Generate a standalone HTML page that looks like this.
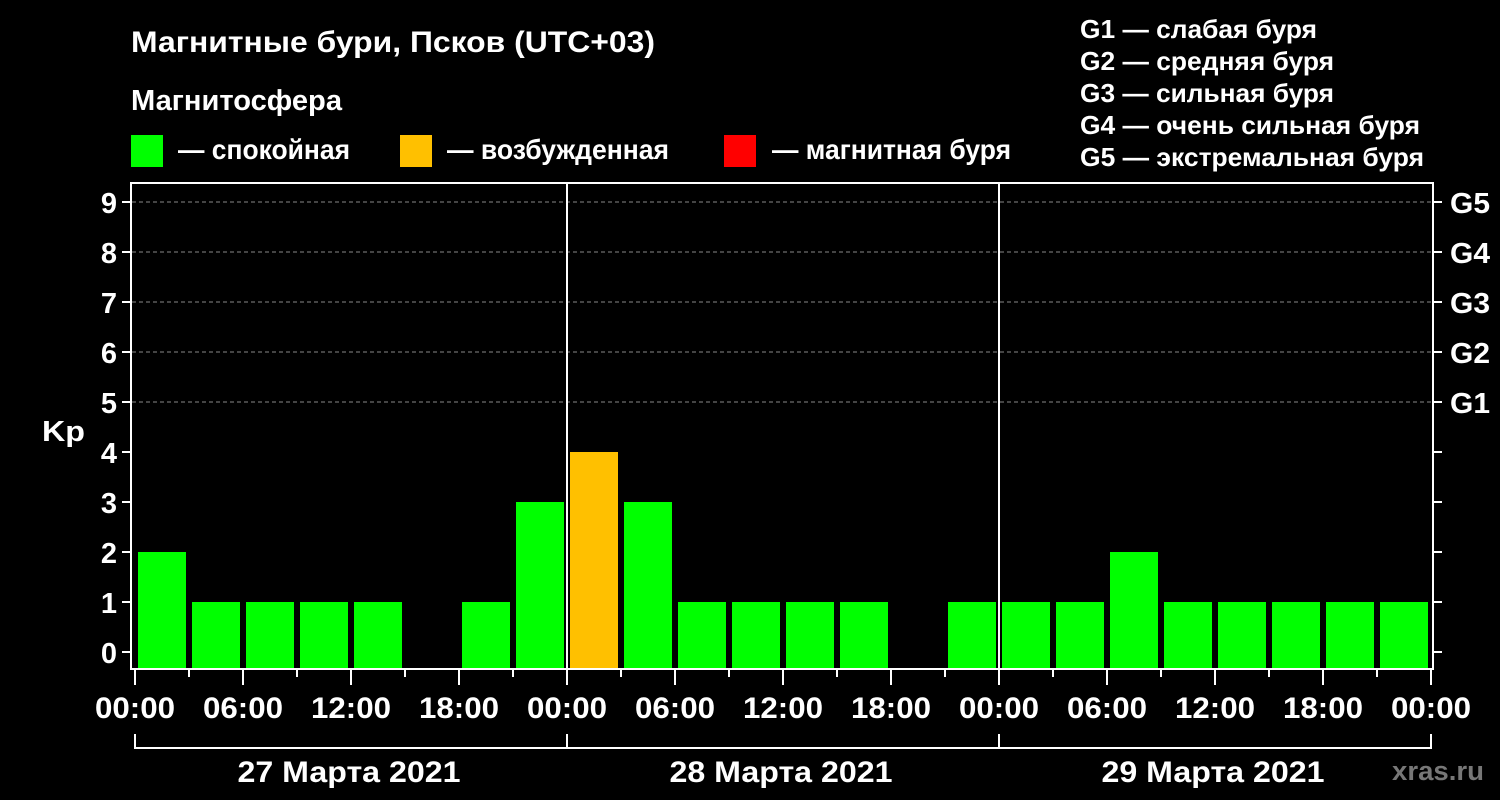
<!DOCTYPE html>
<html><head><meta charset="utf-8"><style>
html,body{margin:0;padding:0;background:#000;}
svg{display:block;}
text{font-family:"Liberation Sans",Arial,sans-serif;font-weight:bold;fill:#fff;}
</style></head><body>
<svg width="1500" height="800" viewBox="0 0 1500 800" xmlns="http://www.w3.org/2000/svg">
<rect width="1500" height="800" fill="#000"/>
<text x="131" y="52" font-size="30" textLength="524" lengthAdjust="spacingAndGlyphs">Магнитные бури, Псков (UTC+03)</text>
<text x="131" y="110" font-size="29" textLength="211" lengthAdjust="spacingAndGlyphs">Магнитосфера</text>
<rect x="131" y="135" width="32" height="32" fill="#00ff00"/>
<text x="178" y="159" font-size="28" textLength="172" lengthAdjust="spacingAndGlyphs">— спокойная</text>
<rect x="400" y="135" width="32" height="32" fill="#ffc000"/>
<text x="447" y="159" font-size="28" textLength="222" lengthAdjust="spacingAndGlyphs">— возбужденная</text>
<rect x="724" y="135" width="32" height="32" fill="#ff0000"/>
<text x="772" y="159" font-size="28" textLength="239" lengthAdjust="spacingAndGlyphs">— магнитная буря</text>
<g font-size="26">
<text x="1080" y="38" textLength="237" lengthAdjust="spacingAndGlyphs">G1 — слабая буря</text>
<text x="1080" y="70" textLength="254" lengthAdjust="spacingAndGlyphs">G2 — средняя буря</text>
<text x="1080" y="102" textLength="254" lengthAdjust="spacingAndGlyphs">G3 — сильная буря</text>
<text x="1080" y="134" textLength="340" lengthAdjust="spacingAndGlyphs">G4 — очень сильная буря</text>
<text x="1080" y="166" textLength="344" lengthAdjust="spacingAndGlyphs">G5 — экстремальная буря</text>
</g>
<g stroke="#888" stroke-width="1" stroke-dasharray="4,3">
<line x1="132" y1="202" x2="1432" y2="202"/><line x1="132" y1="252" x2="1432" y2="252"/>
<line x1="132" y1="302" x2="1432" y2="302"/><line x1="132" y1="352" x2="1432" y2="352"/>
<line x1="132" y1="402" x2="1432" y2="402"/>
</g>
<g fill="#00ff00">
<rect x="138" y="552" width="48" height="116"/>
<rect x="192" y="602" width="48" height="66"/>
<rect x="246" y="602" width="48" height="66"/>
<rect x="300" y="602" width="48" height="66"/>
<rect x="354" y="602" width="48" height="66"/>
<rect x="462" y="602" width="48" height="66"/>
<rect x="516" y="502" width="48" height="166"/>
<rect x="624" y="502" width="48" height="166"/>
<rect x="678" y="602" width="48" height="66"/>
<rect x="732" y="602" width="48" height="66"/>
<rect x="786" y="602" width="48" height="66"/>
<rect x="840" y="602" width="48" height="66"/>
<rect x="948" y="602" width="48" height="66"/>
<rect x="1002" y="602" width="48" height="66"/>
<rect x="1056" y="602" width="48" height="66"/>
<rect x="1110" y="552" width="48" height="116"/>
<rect x="1164" y="602" width="48" height="66"/>
<rect x="1218" y="602" width="48" height="66"/>
<rect x="1272" y="602" width="48" height="66"/>
<rect x="1326" y="602" width="48" height="66"/>
<rect x="1380" y="602" width="48" height="66"/>
</g>
<rect x="570" y="452" width="48" height="216" fill="#ffc000"/>
<g stroke="#fff" stroke-width="2" fill="none">
<rect x="131" y="183" width="1302" height="486"/>
<line x1="567" y1="183" x2="567" y2="669"/>
<line x1="999" y1="183" x2="999" y2="669"/>
</g>
<g stroke="#fff" stroke-width="2">
<line x1="122" y1="202" x2="131" y2="202"/><line x1="122" y1="252" x2="131" y2="252"/>
<line x1="122" y1="302" x2="131" y2="302"/><line x1="122" y1="352" x2="131" y2="352"/>
<line x1="122" y1="402" x2="131" y2="402"/><line x1="122" y1="452" x2="131" y2="452"/>
<line x1="122" y1="502" x2="131" y2="502"/><line x1="122" y1="552" x2="131" y2="552"/>
<line x1="122" y1="602" x2="131" y2="602"/><line x1="122" y1="652" x2="131" y2="652"/>
<line x1="1433" y1="202" x2="1442" y2="202"/><line x1="1433" y1="252" x2="1442" y2="252"/>
<line x1="1433" y1="302" x2="1442" y2="302"/><line x1="1433" y1="352" x2="1442" y2="352"/>
<line x1="1433" y1="402" x2="1442" y2="402"/><line x1="1433" y1="452" x2="1442" y2="452"/>
<line x1="1433" y1="502" x2="1442" y2="502"/><line x1="1433" y1="552" x2="1442" y2="552"/>
<line x1="1433" y1="602" x2="1442" y2="602"/><line x1="1433" y1="652" x2="1442" y2="652"/>
<line x1="135" y1="670" x2="135" y2="685"/><line x1="243" y1="670" x2="243" y2="685"/>
<line x1="351" y1="670" x2="351" y2="685"/><line x1="459" y1="670" x2="459" y2="685"/>
<line x1="567" y1="670" x2="567" y2="685"/><line x1="675" y1="670" x2="675" y2="685"/>
<line x1="783" y1="670" x2="783" y2="685"/><line x1="891" y1="670" x2="891" y2="685"/>
<line x1="999" y1="670" x2="999" y2="685"/><line x1="1107" y1="670" x2="1107" y2="685"/>
<line x1="1215" y1="670" x2="1215" y2="685"/><line x1="1323" y1="670" x2="1323" y2="685"/>
<line x1="1431" y1="670" x2="1431" y2="685"/>
<line x1="189" y1="670" x2="189" y2="677"/><line x1="297" y1="670" x2="297" y2="677"/>
<line x1="405" y1="670" x2="405" y2="677"/><line x1="513" y1="670" x2="513" y2="677"/>
<line x1="621" y1="670" x2="621" y2="677"/><line x1="729" y1="670" x2="729" y2="677"/>
<line x1="837" y1="670" x2="837" y2="677"/><line x1="945" y1="670" x2="945" y2="677"/>
<line x1="1053" y1="670" x2="1053" y2="677"/><line x1="1161" y1="670" x2="1161" y2="677"/>
<line x1="1269" y1="670" x2="1269" y2="677"/><line x1="1377" y1="670" x2="1377" y2="677"/>
<line x1="135" y1="748" x2="1431" y2="748"/>
<line x1="135" y1="734" x2="135" y2="749"/><line x1="567" y1="734" x2="567" y2="749"/>
<line x1="999" y1="734" x2="999" y2="749"/><line x1="1431" y1="734" x2="1431" y2="749"/>
</g>
<g font-size="29" text-anchor="end">
<text x="117" y="213">9</text><text x="117" y="263">8</text><text x="117" y="313">7</text>
<text x="117" y="363">6</text><text x="117" y="413">5</text><text x="117" y="463">4</text>
<text x="117" y="513">3</text><text x="117" y="563">2</text><text x="117" y="613">1</text>
<text x="117" y="663">0</text>
</g>
<text x="42" y="441" font-size="29" textLength="43" lengthAdjust="spacingAndGlyphs">Kp</text>
<g font-size="29">
<text x="1450" y="213" textLength="40" lengthAdjust="spacingAndGlyphs">G5</text><text x="1450" y="263" textLength="40" lengthAdjust="spacingAndGlyphs">G4</text><text x="1450" y="313" textLength="40" lengthAdjust="spacingAndGlyphs">G3</text>
<text x="1450" y="363" textLength="40" lengthAdjust="spacingAndGlyphs">G2</text><text x="1450" y="413" textLength="40" lengthAdjust="spacingAndGlyphs">G1</text>
</g>
<g font-size="30" text-anchor="middle">
<text x="135" y="718" textLength="80" lengthAdjust="spacingAndGlyphs">00:00</text><text x="243" y="718" textLength="80" lengthAdjust="spacingAndGlyphs">06:00</text><text x="351" y="718" textLength="80" lengthAdjust="spacingAndGlyphs">12:00</text>
<text x="459" y="718" textLength="80" lengthAdjust="spacingAndGlyphs">18:00</text><text x="567" y="718" textLength="80" lengthAdjust="spacingAndGlyphs">00:00</text><text x="675" y="718" textLength="80" lengthAdjust="spacingAndGlyphs">06:00</text>
<text x="783" y="718" textLength="80" lengthAdjust="spacingAndGlyphs">12:00</text><text x="891" y="718" textLength="80" lengthAdjust="spacingAndGlyphs">18:00</text><text x="999" y="718" textLength="80" lengthAdjust="spacingAndGlyphs">00:00</text>
<text x="1107" y="718" textLength="80" lengthAdjust="spacingAndGlyphs">06:00</text><text x="1215" y="718" textLength="80" lengthAdjust="spacingAndGlyphs">12:00</text><text x="1323" y="718" textLength="80" lengthAdjust="spacingAndGlyphs">18:00</text>
<text x="1431" y="718" textLength="80" lengthAdjust="spacingAndGlyphs">00:00</text>
</g>
<g font-size="30" text-anchor="middle">
<text x="349" y="782" textLength="223" lengthAdjust="spacingAndGlyphs">27 Марта 2021</text>
<text x="781" y="782" textLength="223" lengthAdjust="spacingAndGlyphs">28 Марта 2021</text>
<text x="1213" y="782" textLength="223" lengthAdjust="spacingAndGlyphs">29 Марта 2021</text>
</g>
<text x="1392" y="780" font-size="27" style="fill:#777" textLength="92" lengthAdjust="spacingAndGlyphs">xras.ru</text>
</svg>
</body></html>
